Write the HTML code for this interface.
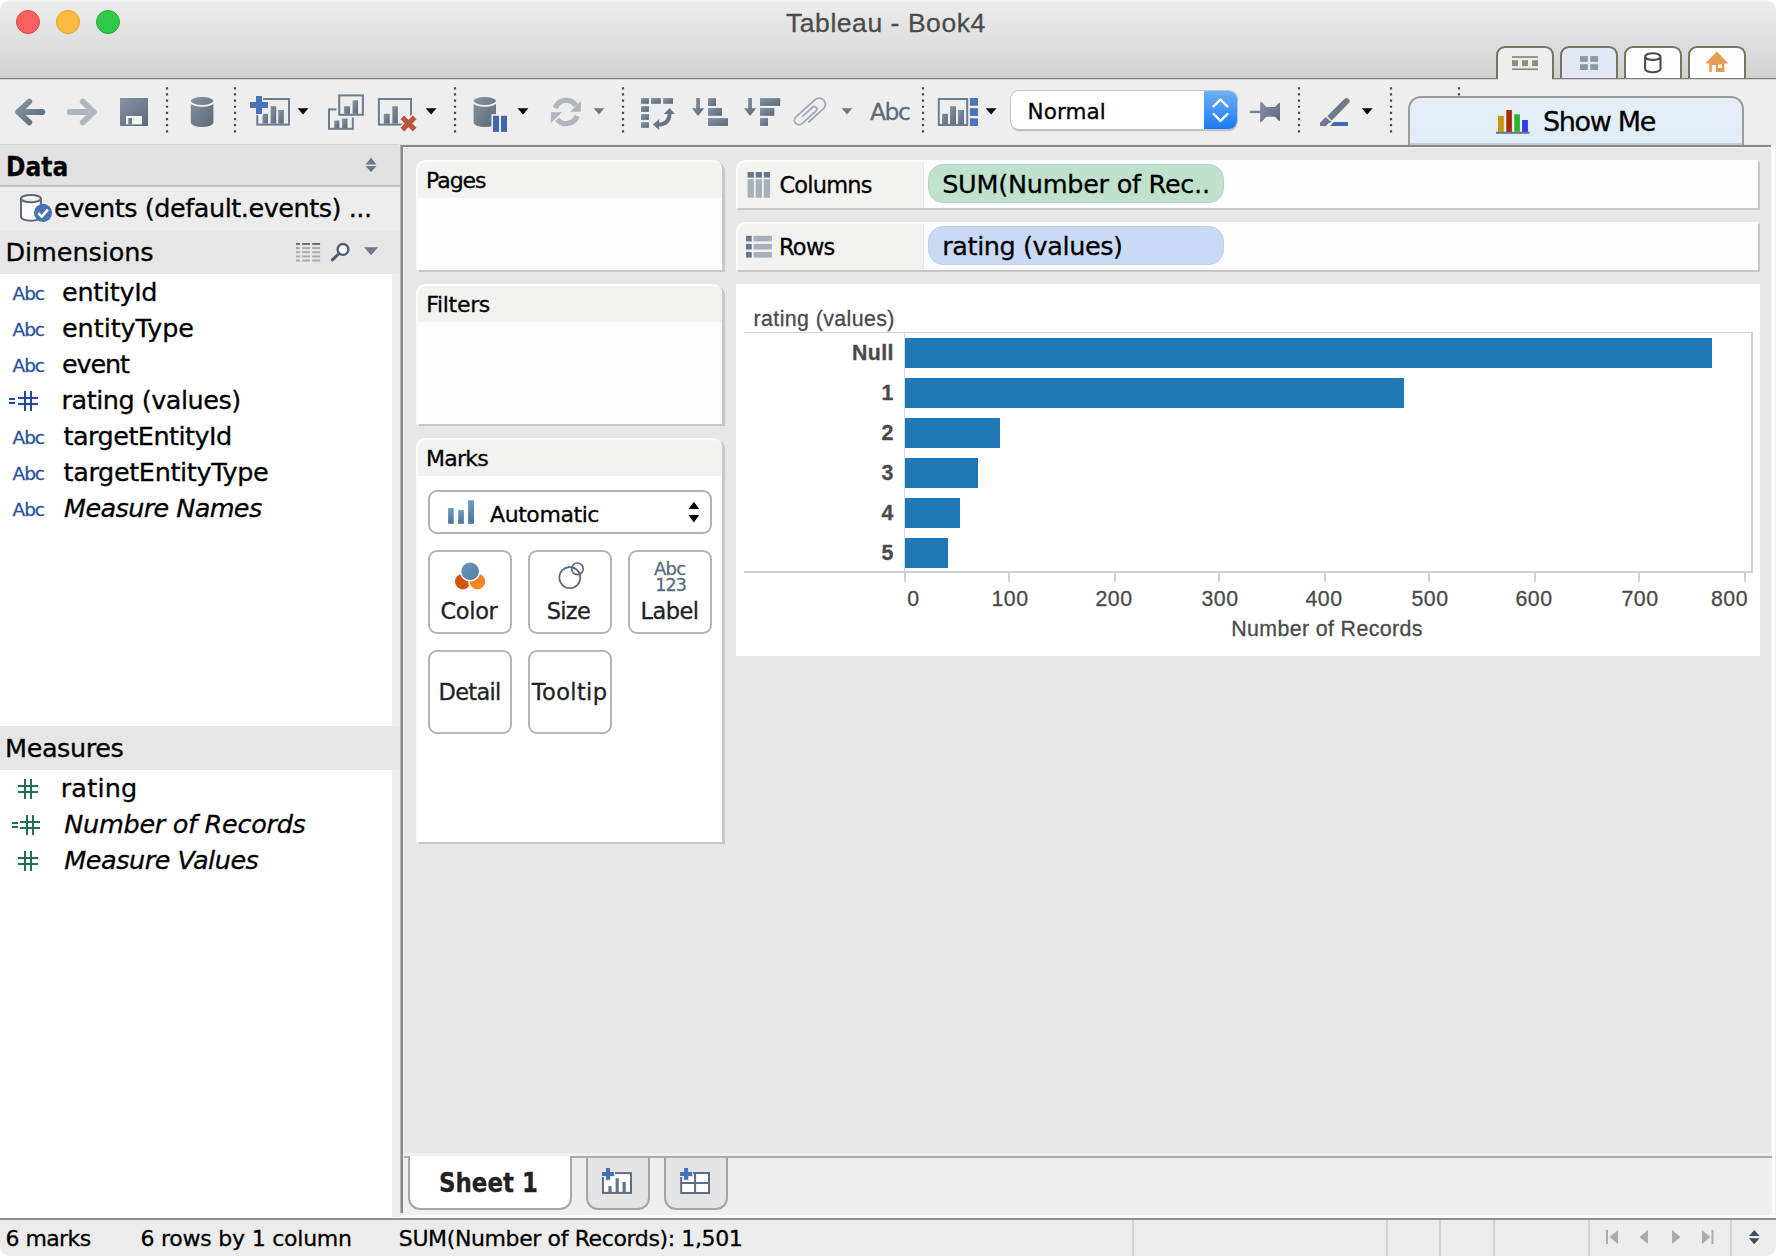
<!DOCTYPE html>
<html lang="en">
<head>
<meta charset="utf-8">
<title>Tableau - Book4</title>
<style>
html,body{margin:0;padding:0;}
body{width:1776px;height:1256px;position:relative;overflow:hidden;background:#e7e7e7;font-family:"DejaVu Sans","Liberation Sans",sans-serif;color:#000;}
div,span{box-sizing:border-box;}
.a{position:absolute;}
.t{position:absolute;white-space:nowrap;line-height:1;-webkit-text-stroke:0.3px currentColor;}
.ar{font-family:"Liberation Sans","DejaVu Sans",sans-serif;}
#icons{position:absolute;left:0;top:0;width:1776px;height:1256px;pointer-events:none;}
/* title bar */
#titlebar{left:0;top:0;width:1776px;height:78px;background:linear-gradient(#f4f4f4 0px,#f4f4f4 1px,#ececec 2.5px,#dfdfdf 40px,#d1d1d1 78px);border-radius:10px 10px 0 0;}
#titleline{left:0;top:78px;width:1776px;height:2px;background:linear-gradient(#7c7c7c 0,#7c7c7c 1.3px,#d0d0d0 1.3px,#d0d0d0 2px);}
#winbg{left:0;top:0;width:1776px;height:20px;background:#fff;}
.tl{border-radius:50%;width:24px;height:24px;top:10px;border:1px solid;}
/* toolbar */
#toolbar{left:0;top:80px;width:1776px;height:64px;background:#eeeeee;}
.wtab{top:46px;width:57px;height:34px;border:2px solid #74745f;border-bottom:none;border-radius:9px 9px 0 0;}
/* left panel */
#left{left:0;top:145px;width:400px;height:1073px;background:#fff;}
/* cards */
.card{background:#fdfdfd;border-radius:9px 9px 0 0;box-shadow:3px 2px 0 #c7c7c7;border-top:2px solid #fdfdfd;border-left:2px solid #fbfbfb;}
.card .hd{position:absolute;left:0;top:0;right:0;background:#f2f2f0;border-radius:8px 8px 0 0;}
.shelf{background:#fdfdfd;border-radius:9px 0 0 0;box-shadow:2px 2px 0 #c6c6c6;border-top:2px solid #fdfdfd;border-left:2px solid #fbfbfb;}
.shelf .lb{position:absolute;left:0;top:0;bottom:0;width:186px;background:#f2f2f0;border-radius:8px 0 0 0;border-right:1px solid #e9e9e7;}
.pill{position:absolute;border-radius:15px;}
.mbtn{position:absolute;width:84px;height:84px;border:2px solid #b4b4b4;border-radius:9px;background:#fff;}
</style>
</head>
<body>
<!-- ======= TITLE BAR ======= -->
<div class="a" id="winbg"></div>
<div class="a" id="titlebar"></div>
<div class="a tl" style="left:16px;background:#fc615d;border-color:#e0443e;"></div>
<div class="a tl" style="left:56px;background:#fdbc40;border-color:#dfa023;"></div>
<div class="a tl" style="left:96px;background:#34c84a;border-color:#1eab2f;"></div>
<div class="t ar" style="left:786px;top:10px;font-size:26.5px;letter-spacing:0.55px;color:#4b4b4b;">Tableau - Book4</div>
<!-- SECTION:TOOLBAR -->
<!-- ======= TOOLBAR ======= -->
<div class="a" id="toolbar"></div>
<div class="a" id="titleline"></div>
<!-- window tabs -->
<div class="a wtab" style="left:1496px;width:58px;background:#eeeeee;height:33px;"></div>
<div class="a wtab" style="left:1560px;width:58px;background:#e2e8f4;height:32px;"></div>
<div class="a wtab" style="left:1624px;width:58px;background:#fdfdfd;height:32px;"></div>
<div class="a wtab" style="left:1688px;width:58px;background:#fdfdfd;height:32px;"></div>
<div class="a" style="left:1498px;top:78px;width:54px;height:2px;background:#eeeeee;"></div>
<!-- toolbar text icon -->
<div class="t" style="left:870px;top:100.8px;font-size:23.5px;letter-spacing:-1.5px;color:#5c6c81;">Abc</div>
<!-- select -->
<div class="a" style="left:1011px;top:91px;width:226px;height:38px;border-radius:8px;background:#fff;box-shadow:0 0 0 1px #c4c4c4,0 2px 1px #b8b8b8;overflow:hidden;">
  <div class="a" style="right:0;top:0;width:33px;height:38px;background:linear-gradient(#6db1f9,#1a79f3);"></div>
</div>
<div class="t" style="left:1027.6px;top:100.9px;font-size:21.5px;letter-spacing:0.05px;color:#000;">Normal</div>
<!-- Show Me -->
<div class="a" style="left:1408px;top:96px;width:336px;height:49px;border:2px solid #9b9b9b;border-bottom:none;border-radius:13px 13px 0 0;background:linear-gradient(#e5eef7 0,#e0ecf6 44.5px,#c2cad1 44.5px);"></div>
<div class="t" style="left:1543px;top:108.4px;font-size:27px;letter-spacing:-1.35px;color:#000;">Show Me</div>
<!-- /SECTION:TOOLBAR -->
<!-- SECTION:LEFT -->
<!-- ======= LEFT DATA PANE ======= -->
<div class="a" id="left"></div>
<div class="a" style="left:0;top:144px;width:399px;height:1px;background:#d2d2d2;"></div>
<div class="a" style="left:0;top:145px;width:400px;height:41px;background:#e1e1e1;"></div>
<div class="a" style="left:0;top:185px;width:400px;height:2px;background:#c0c0c0;"></div>
<div class="a" style="left:0;top:187px;width:400px;height:43px;background:#ececec;"></div>
<div class="a" style="left:0;top:230px;width:400px;height:44px;background:#e6e6e6;"></div>
<div class="a" style="left:392px;top:274px;width:8px;height:943px;background:#ececec;"></div>
<div class="a" style="left:0;top:726px;width:400px;height:44px;background:#e6e6e6;"></div>
<div class="a" style="left:400px;top:145px;width:1px;height:1068px;background:#b4b4b4;"></div>
<div class="a" style="left:401px;top:145px;width:2px;height:1068px;background:#868686;"></div>
<div class="a" style="left:403px;top:147px;width:1px;height:1009px;background:#f3f3f3;"></div>
<div class="t" style="left:5.6px;top:153.6px;font-size:26px;font-weight:bold;transform-origin:0 0;transform:scaleX(0.9);">Data</div>
<div class="t" style="left:54px;top:195.73px;font-size:25.5px;letter-spacing:-0.46px;">events (default.events) ...</div>
<div class="t" style="left:5.5px;top:239.73px;font-size:25.5px;letter-spacing:-0.08px;">Dimensions</div>
<div class="t" style="left:62px;top:280.03px;font-size:25.5px;letter-spacing:-0.31px;">entityId</div>
<div class="t" style="left:12.5px;top:284.95px;font-size:18.5px;letter-spacing:-1.03px;color:#2a5298;">Abc</div>
<div class="t" style="left:62px;top:316.03px;font-size:25.5px;letter-spacing:-0.07px;">entityType</div>
<div class="t" style="left:12.5px;top:320.95px;font-size:18.5px;letter-spacing:-1.03px;color:#2a5298;">Abc</div>
<div class="t" style="left:62px;top:352.03px;font-size:25.5px;letter-spacing:-1.13px;">event</div>
<div class="t" style="left:12.5px;top:356.95px;font-size:18.5px;letter-spacing:-1.03px;color:#2a5298;">Abc</div>
<div class="t" style="left:61.5px;top:388.03px;font-size:25.5px;letter-spacing:-0.49px;">rating (values)</div>
<div class="t" style="left:63.5px;top:424.03px;font-size:25.5px;letter-spacing:-0.53px;">targetEntityId</div>
<div class="t" style="left:12.5px;top:428.95px;font-size:18.5px;letter-spacing:-1.03px;color:#2a5298;">Abc</div>
<div class="t" style="left:63.5px;top:460.03px;font-size:25.5px;letter-spacing:-0.36px;">targetEntityType</div>
<div class="t" style="left:12.5px;top:464.95px;font-size:18.5px;letter-spacing:-1.03px;color:#2a5298;">Abc</div>
<div class="t" style="left:64.1px;top:496.03px;font-size:25.5px;letter-spacing:-0.62px;font-style:italic;">Measure Names</div>
<div class="t" style="left:12.5px;top:500.95px;font-size:18.5px;letter-spacing:-1.03px;color:#2a5298;">Abc</div>
<div class="t" style="left:5.1px;top:735.93px;font-size:25.5px;letter-spacing:-0.44px;">Measures</div>
<div class="t" style="left:60.7px;top:776.13px;font-size:25.5px;letter-spacing:0.2px;">rating</div>
<div class="t" style="left:64.3px;top:812.13px;font-size:25.5px;letter-spacing:-0.29px;font-style:italic;">Number of Records</div>
<div class="t" style="left:64.3px;top:848.13px;font-size:25.5px;letter-spacing:-0.47px;font-style:italic;">Measure Values</div>
<!-- /SECTION:LEFT -->
<!-- SECTION:MAIN -->
<!-- ======= MAIN WORKSPACE ======= -->
<div class="a" style="left:401px;top:145px;width:1370px;height:2px;background:#868686;"></div>
<div class="a" style="left:404px;top:147px;width:1367px;height:1px;background:#f3f3f3;"></div>
<div class="a" style="left:1771px;top:144px;width:5px;height:1074px;background:linear-gradient(90deg,#f1f1f1 0,#f1f1f1 1px,#fdfdfd 1px,#fdfdfd 4px,#ececec 4px);"></div>
<div class="a card" style="left:416px;top:160px;width:306px;height:110px;"><div class="hd" style="height:36px;"></div></div>
<div class="t" style="left:426px;top:170.19px;font-size:22px;letter-spacing:-1.05px;">Pages</div>
<div class="a card" style="left:416px;top:284px;width:306px;height:140px;"><div class="hd" style="height:36px;"></div></div>
<div class="t" style="left:426.2px;top:294.19px;font-size:22px;letter-spacing:-0.3px;">Filters</div>
<div class="a card" style="left:416px;top:438px;width:306px;height:404px;background:#fff;"><div class="hd" style="height:36px;"></div></div>
<div class="t" style="left:426px;top:448.19px;font-size:22px;letter-spacing:-0.72px;">Marks</div>
<div class="a" style="left:428px;top:490px;width:284px;height:44px;border:2px solid #b2b2b2;border-radius:9px;background:#fff;"></div>
<div class="t" style="left:490px;top:504.39px;font-size:22px;letter-spacing:-0.42px;">Automatic</div>
<div class="mbtn" style="left:428px;top:550px;"></div>
<div class="mbtn" style="left:528px;top:550px;"></div>
<div class="mbtn" style="left:628px;top:550px;"></div>
<div class="mbtn" style="left:428px;top:650px;"></div>
<div class="mbtn" style="left:528px;top:650px;"></div>
<div class="t" style="left:440.5px;top:599.87px;font-size:22.5px;letter-spacing:-0.35px;color:#222;">Color</div>
<div class="t" style="left:546.8px;top:599.87px;font-size:22.5px;letter-spacing:-0.75px;color:#222;">Size</div>
<div class="t" style="left:640.6px;top:599.87px;font-size:22.5px;letter-spacing:-0.56px;color:#222;">Label</div>
<div class="t" style="left:438.6px;top:681.17px;font-size:22.5px;letter-spacing:-0.7px;color:#222;">Detail</div>
<div class="t" style="left:531.8px;top:681.17px;font-size:22.5px;letter-spacing:0.36px;color:#222;">Tooltip</div>
<div class="t" style="left:654px;top:560.37px;font-size:18px;letter-spacing:-0.75px;color:#5a6a80;">Abc</div>
<div class="t" style="left:655.3px;top:577.0px;font-size:17.5px;letter-spacing:-0.9px;color:#5a6a80;">123</div>
<div class="a shelf" style="left:736px;top:160px;width:1022px;height:48px;"><div class="lb"></div></div>
<div class="a shelf" style="left:736px;top:222px;width:1022px;height:48px;"><div class="lb"></div></div>
<div class="t" style="left:779.5px;top:173.97px;font-size:22.5px;letter-spacing:-0.84px;">Columns</div>
<div class="t" style="left:778.9px;top:235.97px;font-size:22.5px;letter-spacing:-0.7px;">Rows</div>
<div class="pill" style="left:928px;top:164px;width:296px;height:39px;background:#bfe1cd;border:1px solid #b3d7c2;"></div>
<div class="pill" style="left:928px;top:226px;width:296px;height:39px;background:#cadaf4;border:1px solid #bdd0ee;"></div>
<div class="t" style="left:942.2px;top:172.03px;font-size:25.5px;letter-spacing:-0.26px;">SUM(Number of Rec..</div>
<div class="t" style="left:942.3px;top:233.63px;font-size:25.5px;letter-spacing:-0.41px;">rating (values)</div>
<div class="a" style="left:736px;top:284px;width:1024px;height:372px;background:#fff;"></div>
<div class="t ar" style="left:753.6px;top:308.85px;font-size:21.33px;letter-spacing:0.4px;color:#4a4a4a;">rating (values)</div>
<div class="a" style="left:744px;top:332px;width:1009px;height:1px;background:#d4d4d4;"></div>
<div class="a" style="left:1751px;top:332px;width:2px;height:241px;background:#d2d2d2;"></div>
<div class="a" style="left:904px;top:333px;width:1px;height:238px;background:#dcdcdc;"></div>
<div class="a" style="left:744px;top:571px;width:1009px;height:2px;background:#cfcfcf;"></div>
<div class="a" style="left:905px;top:338px;width:806.7px;height:30px;background:#1f77b4;"></div>
<div class="t ar" style="right:882.2px;top:342.55px;font-size:21.33px;font-weight:bold;letter-spacing:0.4px;color:#4a4a4a;">Null</div>
<div class="a" style="left:905px;top:378px;width:498.7px;height:30px;background:#1f77b4;"></div>
<div class="t ar" style="right:882.2px;top:382.55px;font-size:21.33px;font-weight:bold;letter-spacing:0.4px;color:#4a4a4a;">1</div>
<div class="a" style="left:905px;top:418px;width:95px;height:30px;background:#1f77b4;"></div>
<div class="t ar" style="right:882.2px;top:422.55px;font-size:21.33px;font-weight:bold;letter-spacing:0.4px;color:#4a4a4a;">2</div>
<div class="a" style="left:905px;top:458px;width:73px;height:30px;background:#1f77b4;"></div>
<div class="t ar" style="right:882.2px;top:462.55px;font-size:21.33px;font-weight:bold;letter-spacing:0.4px;color:#4a4a4a;">3</div>
<div class="a" style="left:905px;top:498px;width:54.7px;height:30px;background:#1f77b4;"></div>
<div class="t ar" style="right:882.2px;top:502.55px;font-size:21.33px;font-weight:bold;letter-spacing:0.4px;color:#4a4a4a;">4</div>
<div class="a" style="left:905px;top:538px;width:42.9px;height:30px;background:#1f77b4;"></div>
<div class="t ar" style="right:882.2px;top:542.55px;font-size:21.33px;font-weight:bold;letter-spacing:0.4px;color:#4a4a4a;">5</div>
<div class="a" style="left:904px;top:573px;width:2px;height:9px;background:#d0d0d0;"></div>
<div class="t ar" style="left:907.3px;top:588.85px;font-size:21.33px;color:#4a4a4a;">0</div>
<div class="a" style="left:1008px;top:573px;width:2px;height:9px;background:#d0d0d0;"></div>
<div class="t ar" style="left:950px;width:120px;text-align:center;top:588.85px;font-size:21.33px;color:#4a4a4a;letter-spacing:0.45px;">100</div>
<div class="a" style="left:1114px;top:573px;width:2px;height:9px;background:#d0d0d0;"></div>
<div class="t ar" style="left:1054px;width:120px;text-align:center;top:588.85px;font-size:21.33px;color:#4a4a4a;letter-spacing:0.45px;">200</div>
<div class="a" style="left:1218px;top:573px;width:2px;height:9px;background:#d0d0d0;"></div>
<div class="t ar" style="left:1160px;width:120px;text-align:center;top:588.85px;font-size:21.33px;color:#4a4a4a;letter-spacing:0.45px;">300</div>
<div class="a" style="left:1324px;top:573px;width:2px;height:9px;background:#d0d0d0;"></div>
<div class="t ar" style="left:1264px;width:120px;text-align:center;top:588.85px;font-size:21.33px;color:#4a4a4a;letter-spacing:0.45px;">400</div>
<div class="a" style="left:1428px;top:573px;width:2px;height:9px;background:#d0d0d0;"></div>
<div class="t ar" style="left:1370px;width:120px;text-align:center;top:588.85px;font-size:21.33px;color:#4a4a4a;letter-spacing:0.45px;">500</div>
<div class="a" style="left:1534px;top:573px;width:2px;height:9px;background:#d0d0d0;"></div>
<div class="t ar" style="left:1474px;width:120px;text-align:center;top:588.85px;font-size:21.33px;color:#4a4a4a;letter-spacing:0.45px;">600</div>
<div class="a" style="left:1638px;top:573px;width:2px;height:9px;background:#d0d0d0;"></div>
<div class="t ar" style="left:1580px;width:120px;text-align:center;top:588.85px;font-size:21.33px;color:#4a4a4a;letter-spacing:0.45px;">700</div>
<div class="a" style="left:1744px;top:573px;width:2px;height:9px;background:#d0d0d0;"></div>
<div class="t ar" style="right:28px;top:588.85px;font-size:21.33px;color:#4a4a4a;letter-spacing:0.45px;">800</div>
<div class="t ar" style="left:1127px;width:400px;text-align:center;top:618.55px;font-size:21.33px;letter-spacing:0.38px;color:#4a4a4a;">Number of Records</div>
<!-- /SECTION:MAIN -->
<!-- SECTION:BOTTOM -->
<!-- ======= SHEET TABS + STATUS BAR ======= -->
<div class="a" style="left:403px;top:1153px;width:1369px;height:62px;background:#efefef;"></div>
<div class="a" style="left:404px;top:1156px;width:1368px;height:2px;background:#ababab;"></div>
<div class="a" style="left:400px;top:1215px;width:1376px;height:3px;background:#fbfbfb;"></div>
<div class="a" style="left:408px;top:1156px;width:164px;height:54px;background:#fff;border:2px solid #a6a6a6;border-top:none;border-radius:0 0 12px 12px;"></div>
<div class="a" style="left:586px;top:1158px;width:64px;height:52px;background:#e4e4e4;border:2px solid #a4a4a4;border-top:none;border-radius:0 0 12px 12px;"></div>
<div class="a" style="left:664px;top:1158px;width:64px;height:52px;background:#e4e4e4;border:2px solid #a4a4a4;border-top:none;border-radius:0 0 12px 12px;"></div>
<div class="t" style="left:438.7px;top:1169.06px;font-size:27px;font-weight:bold;color:#222;transform-origin:0 0;transform:scaleX(0.85);">Sheet 1</div>
<div class="a" style="left:0;top:1236px;width:1776px;height:20px;background:#fff;"></div>
<div class="a" style="left:0;top:1218px;width:1776px;height:38px;background:#ececec;border-top:2px solid #8e8e8e;border-radius:0 0 9px 9px;"></div>
<div class="t" style="left:5.6px;top:1228.19px;font-size:22px;letter-spacing:-0.6px;">6 marks</div>
<div class="t" style="left:140.5px;top:1228.19px;font-size:22px;letter-spacing:-0.23px;">6 rows by 1 column</div>
<div class="t" style="left:398.8px;top:1228.19px;font-size:22px;letter-spacing:-0.38px;">SUM(Number of Records): 1,501</div>
<div class="a" style="left:1132px;top:1220px;width:2px;height:36px;background:#d2d2d2;"></div>
<div class="a" style="left:1386px;top:1220px;width:2px;height:36px;background:#d2d2d2;"></div>
<div class="a" style="left:1439px;top:1220px;width:2px;height:36px;background:#d2d2d2;"></div>
<div class="a" style="left:1493px;top:1220px;width:2px;height:36px;background:#d2d2d2;"></div>
<div class="a" style="left:1588px;top:1220px;width:2px;height:36px;background:#d2d2d2;"></div>
<div class="a" style="left:1730px;top:1220px;width:2px;height:36px;background:#d2d2d2;"></div>
<!-- /SECTION:BOTTOM -->
<!-- SECTION:ICONS -->
<!-- ======= ICONS (single overlay SVG, absolute coordinates) ======= -->
<svg id="icons" width="1776" height="1256" viewBox="0 0 1776 1256">
<defs>
<linearGradient id="g" x1="0" y1="0" x2="1" y2="1"><stop offset="0" stop-color="#8694a4"/><stop offset="1" stop-color="#5a697b"/></linearGradient>
<linearGradient id="gl" x1="0" y1="0" x2="1" y2="1"><stop offset="0" stop-color="#b4bcc6"/><stop offset="1" stop-color="#a3acb8"/></linearGradient>
<linearGradient id="gv" x1="0" y1="0" x2="0" y2="1"><stop offset="0" stop-color="#6f9cc0"/><stop offset="1" stop-color="#46749c"/></linearGradient>
<linearGradient id="gb" x1="0" y1="0" x2="1" y2="1"><stop offset="0" stop-color="#6d98bd"/><stop offset="1" stop-color="#4f7ea6"/></linearGradient>
</defs>
<line x1="167" y1="87.2" x2="167" y2="133" stroke="#4c4c4c" stroke-width="2.2" stroke-dasharray="2.2 3.95"/>
<line x1="235" y1="87.2" x2="235" y2="133" stroke="#4c4c4c" stroke-width="2.2" stroke-dasharray="2.2 3.95"/>
<line x1="455" y1="87.2" x2="455" y2="133" stroke="#4c4c4c" stroke-width="2.2" stroke-dasharray="2.2 3.95"/>
<line x1="623" y1="87.2" x2="623" y2="133" stroke="#4c4c4c" stroke-width="2.2" stroke-dasharray="2.2 3.95"/>
<line x1="923" y1="87.2" x2="923" y2="133" stroke="#4c4c4c" stroke-width="2.2" stroke-dasharray="2.2 3.95"/>
<line x1="1299" y1="87.2" x2="1299" y2="133" stroke="#4c4c4c" stroke-width="2.2" stroke-dasharray="2.2 3.95"/>
<line x1="1391" y1="87.2" x2="1391" y2="133" stroke="#4c4c4c" stroke-width="2.2" stroke-dasharray="2.2 3.95"/>
<line x1="1459" y1="87.2" x2="1459" y2="96" stroke="#4c4c4c" stroke-width="2.2" stroke-dasharray="2.2 3.95"/>
<g fill="none" stroke-linecap="round" stroke-linejoin="round" stroke-width="5.8">
<path d="M42.3 112H18.2M29.3 101.6L18.2 112l11.1 10.4" stroke="url(#g)"/>
<path d="M69.7 112H93.8M82.7 101.6L93.8 112l-11.1 10.4" stroke="#aeb6c0"/>
</g>
<rect x="120" y="98" width="28" height="28" fill="url(#g)"/>
<rect x="126" y="116" width="16" height="8.3" fill="#f4f4f4"/>
<rect x="128.4" y="118" width="3.5" height="6.3" fill="#66758a"/>
<path d="M190.8 101.10000000000001A11.299999999999997 4.2 0 0 1 213.4 101.10000000000001V122.8A11.299999999999997 4.2 0 0 1 190.8 122.8Z" fill="url(#g)"/>
<path d="M190.8 101.7A11.299999999999997 4.2 0 0 0 213.4 101.7" fill="none" stroke="#f0f1f3" stroke-width="1.8"/>
<rect x="257.3" y="99" width="31.7" height="25.6" fill="none" stroke="#6d7b8e" stroke-width="2"/>
<rect x="262.5" y="113.8" width="5.5" height="9.8" fill="url(#g)"/>
<rect x="270.6" y="106.2" width="5.6" height="17.4" fill="url(#g)"/>
<rect x="278.2" y="110" width="5.6" height="13.6" fill="url(#g)"/>
<path d="M256 96h6v6h6v6h-6v6h-6v-6h-6v-6h6z" fill="#4a74b8" stroke="#eeeeee" stroke-width="2.4" paint-order="stroke"/>
<path d="M297.6 108.2h10.8l-5.4 6.2z" fill="#000"/>
<rect x="329" y="109.4" width="23.8" height="19.4" fill="none" stroke="#6d7b8e" stroke-width="2"/>
<rect x="334.3" y="120.5" width="5.1" height="7.6" fill="url(#g)"/>
<rect x="342.1" y="118.5" width="5.4" height="9.6" fill="url(#g)"/>
<rect x="336.4" y="92.6" width="29.3" height="25" fill="#eeeeee"/>
<rect x="339.2" y="95.4" width="23.7" height="19.4" fill="none" stroke="#6d7b8e" stroke-width="2"/>
<rect x="344.1" y="106.2" width="5.9" height="7.6" fill="url(#g)"/>
<rect x="352.6" y="100.3" width="5.4" height="13.5" fill="url(#g)"/>
<rect x="378.9" y="99" width="32.1" height="25.6" fill="none" stroke="#6d7b8e" stroke-width="2"/>
<rect x="383.8" y="113.8" width="5.9" height="9.8" fill="url(#g)"/>
<rect x="392.3" y="106.2" width="5.5" height="17.4" fill="url(#g)"/>
<path d="M402.3 117.3l12.4 12.4M414.7 117.3l-12.4 12.4" stroke="#eeeeee" stroke-width="8" fill="none"/>
<path d="M402.3 117.3l12.4 12.4M414.7 117.3l-12.4 12.4" stroke="#b7553a" stroke-width="5.2" fill="none"/>
<path d="M425.7 108.2h10.8l-5.4 6.2z" fill="#000"/>
<path d="M473.6 101.10000000000001A11.199999999999989 4.2 0 0 1 496 101.10000000000001V122.8A11.199999999999989 4.2 0 0 1 473.6 122.8Z" fill="url(#g)"/>
<path d="M473.6 101.7A11.199999999999989 4.2 0 0 0 496 101.7" fill="none" stroke="#f0f1f3" stroke-width="1.8"/>
<rect x="491.4" y="114.2" width="17.2" height="19" fill="#eeeeee"/>
<rect x="493" y="115.8" width="6" height="16.1" fill="#3f68ae"/><rect x="501" y="115.8" width="6" height="16.1" fill="#3f68ae"/>
<path d="M517.6 108.2h10.8l-5.4 6.2z" fill="#000"/>
<g fill="none" stroke="#adb5c0" stroke-width="5.3">
<path d="M555.3 108A11.6 11.6 0 0 1 575.8 105.5"/>
<path d="M577.1 116A11.6 11.6 0 0 1 557.2 119.3"/>
</g>
<path d="M580.9 101.1v10.7h-10.7z" fill="#adb5c0"/>
<path d="M550.9 123.1v-10.9h10.9z" fill="#adb5c0"/>
<path d="M593.6 108.2h10.8l-5.4 6.2z" fill="#7b7b7b"/>
<rect x="641" y="98.1" width="7.9" height="5.7" fill="url(#g)"/>
<rect x="651" y="98.1" width="9.8" height="5.7" fill="url(#g)"/>
<rect x="663.2" y="98.1" width="9.8" height="5.7" fill="url(#g)"/>
<rect x="641" y="106.2" width="7.9" height="5.7" fill="url(#g)"/>
<rect x="641" y="114.1" width="7.9" height="5.8" fill="url(#g)"/>
<rect x="641" y="122.2" width="7.9" height="5.6" fill="url(#g)"/>
<path d="M658.5 124.6Q669.6 124.2 669.6 113.4" fill="none" stroke="#65748a" stroke-width="3.8"/>
<path d="M659.2 119v11.1l-6.2 -5.55z" fill="#65748a"/>
<path d="M664 114h11l-5.5 -6z" fill="#65748a"/>
<path d="M696.1999999999999 98.1h3.7v10.2h4.3l-6.15 7.6l-6.15 -7.6h4.3z" fill="url(#g)"/>
<rect x="708" y="98.1" width="8" height="7.8" fill="url(#g)"/>
<rect x="708" y="108" width="14" height="7.8" fill="url(#g)"/>
<rect x="708" y="118.1" width="20" height="7.8" fill="url(#g)"/>
<path d="M748.1999999999999 98.1h3.7v10.2h4.3l-6.15 7.6l-6.15 -7.6h4.3z" fill="url(#g)"/>
<rect x="760" y="98.1" width="20.2" height="7.8" fill="url(#g)"/>
<rect x="760" y="108" width="14.3" height="7.8" fill="url(#g)"/>
<rect x="760" y="118.1" width="8" height="7.8" fill="url(#g)"/>
<g transform="translate(803.7 109.9) rotate(48)" fill="none" stroke="#a1abb7" stroke-width="1.8">
<path d="M4 5.95V-8.4A2.5 2.5 0 0 1 9 -8.4V10.4A4.5 4.5 0 0 1 0 10.4V-15.2A6.2 6.2 0 0 1 12.4 -15.2V5"/>
</g>
<path d="M841.6 108.2h10.8l-5.4 6.2z" fill="#7b7b7b"/>
<rect x="938.8" y="99" width="28.4" height="26" fill="none" stroke="#6d7b8e" stroke-width="2"/>
<rect x="942" y="113.8" width="5.9" height="10.5" fill="url(#g)"/>
<rect x="950" y="106.2" width="6" height="18.1" fill="url(#g)"/>
<rect x="958" y="110" width="6" height="14.3" fill="url(#g)"/>
<rect x="969.9" y="98" width="8.1" height="7.7" fill="#4a74b8"/>
<rect x="969.9" y="108.2" width="8.1" height="7.7" fill="#4a74b8"/>
<rect x="969.9" y="118.3" width="8.1" height="7.7" fill="#4a74b8"/>
<path d="M985.7 108.2h10.8l-5.4 6.2z" fill="#000"/>
<path d="M1213.6 106.3l6.9 -6.8l6.9 6.8M1213.6 114l6.9 6.8l6.9 -6.8" fill="none" stroke="#fff" stroke-width="2.4" stroke-linecap="round" stroke-linejoin="round"/>
<rect x="1249.9" y="110.7" width="11" height="2.4" fill="#76849a"/>
<path d="M1260.1 101.8C1263.2 101.8 1264.6 106.9 1267.2 106.9H1274.3C1276.4 106.9 1277.8 102.8 1280 102.8V121.1C1277.8 121.1 1276.4 116.8 1274.3 116.8H1267.2C1264.6 116.8 1263.2 122.2 1260.1 122.2Z" fill="url(#g)"/>
<path d="M1346.5 101.2L1330.3 117.5" stroke="#6c7a8d" stroke-width="6.1" stroke-linecap="round" fill="none"/>
<path d="M1326.9 116.2l4.8 4.8l-2.6 2.6l-4.8 -4.8z" fill="#6c7a8d"/>
<path d="M1324.7 117.7l4.6 4.3l-3.1 3.9h-6.2v-2.9z" fill="#6c7a8d"/>
<path d="M1325.6 115.6l5.2 5.2" stroke="#eeeeee" stroke-width="1.5" fill="none"/>
<path d="M1333.8 121.9h14.2v4h-17.8z" fill="#3f6bb0"/>
<path d="M1361.8 108.2h10.8l-5.4 6.2z" fill="#000"/>
<rect x="1498" y="115.9" width="5.8" height="16" fill="#c8960a"/><rect x="1506.3" y="110" width="5.6" height="22" fill="#a52c08"/><rect x="1514.3" y="114.3" width="5.6" height="17.5" fill="#2bb52b"/><rect x="1522.1" y="120" width="5.8" height="12" fill="#3434fe"/><rect x="1496" y="131.8" width="33.7" height="2" fill="#5f7893"/>
<g fill="#908d76"><rect x="1512" y="56.1" width="26" height="1.8"/><rect x="1512" y="68.3" width="26" height="1.8"/><rect x="1512" y="60.2" width="5.9" height="5.9"/><rect x="1522.1" y="60.2" width="5.9" height="5.9"/><rect x="1532.1" y="60.2" width="5.9" height="5.9"/></g>
<g fill="#8997a7"><rect x="1580" y="56.1" width="7.8" height="5.7"/><rect x="1590.3" y="56.1" width="7.8" height="5.7"/><rect x="1580" y="64.2" width="7.8" height="5.8"/><rect x="1590.3" y="64.2" width="7.8" height="5.8"/></g>
<path d="M1645.1 56.6A7.7 3.3 0 0 1 1660.5 56.6V68.9A7.7 3.3 0 0 1 1645.1 68.9ZM1645.1 56.6A7.7 3.3 0 0 0 1660.5 56.6" fill="#fff" stroke="#4b4b4b" stroke-width="2.1"/>
<path d="M1716.9 51.6l11.4 11.8h-4v8.5h-8.4v-6.9h-4.1v6.9h-2.6v-8.5h-3.7zM1718 64.4h4v3.5h-4z" fill="#e99a55" fill-rule="evenodd"/>
<path d="M365.6 164.4h10.9l-5.45 -6.6zM365.6 166h10.9l-5.45 6.2z" fill="#6b798c"/>
<path d="M21 198.6A9.9 3.7 0 0 1 40.9 198.6V217A9.9 3.7 0 0 1 21 217ZM21 198.6A9.9 3.7 0 0 0 40.9 198.6" fill="#fcfcfc" stroke="#5b6979" stroke-width="2"/>
<circle cx="43" cy="212.9" r="9.1" fill="#4a72b5"/>
<path d="M38.3 213.2l3.4 3.4l6.2 -7" fill="none" stroke="#fff" stroke-width="2.6"/>
<g fill="#a9a9a9">
<rect x="296" y="243.0" width="4" height="1.9" fill="#5b6b80"/><rect x="302.1" y="243.0" width="7.9" height="1.9" fill="#5b6b80"/><rect x="312.2" y="243.0" width="7.9" height="1.9" fill="#5b6b80"/>
<rect x="296" y="247.15" width="4" height="1.9"/><rect x="302.1" y="247.15" width="7.9" height="1.9"/><rect x="312.2" y="247.15" width="7.9" height="1.9"/>
<rect x="296" y="251.3" width="4" height="1.9"/><rect x="302.1" y="251.3" width="7.9" height="1.9"/><rect x="312.2" y="251.3" width="7.9" height="1.9"/>
<rect x="296" y="255.45" width="4" height="1.9"/><rect x="302.1" y="255.45" width="7.9" height="1.9"/><rect x="312.2" y="255.45" width="7.9" height="1.9"/>
<rect x="296" y="259.6" width="4" height="1.9"/><rect x="302.1" y="259.6" width="7.9" height="1.9"/><rect x="312.2" y="259.6" width="7.9" height="1.9"/>
</g>
<circle cx="343" cy="249.4" r="5.4" fill="#fff" stroke="#4d5d73" stroke-width="2.3"/><path d="M339 253.6l-6.6 6.2" stroke="#4d5d73" stroke-width="3" stroke-linecap="round"/>
<path d="M364 247.2h14.1l-7.05 8z" fill="#6b798c"/>
<g fill="#1e4b95">
<rect x="24" y="391" width="2" height="20"/><rect x="30" y="391" width="2" height="20"/>
<rect x="18" y="397" width="20" height="2"/><rect x="18" y="403" width="20" height="2"/>
<rect x="9" y="398" width="6" height="2"/><rect x="9" y="402" width="6" height="2"/>
</g>
<g fill="#1f6f50">
<rect x="24" y="779" width="2" height="20"/><rect x="30" y="779" width="2" height="20"/>
<rect x="18" y="785" width="20" height="2"/><rect x="18" y="791" width="20" height="2"/>
</g>
<g fill="#1f6f50">
<rect x="26" y="815" width="2" height="20"/><rect x="32" y="815" width="2" height="20"/>
<rect x="20" y="821" width="20" height="2"/><rect x="20" y="827" width="20" height="2"/>
<rect x="12" y="822" width="6" height="2"/><rect x="12" y="826" width="6" height="2"/>
</g>
<g fill="#1f6f50">
<rect x="24" y="851" width="2" height="20"/><rect x="30" y="851" width="2" height="20"/>
<rect x="18" y="857" width="20" height="2"/><rect x="18" y="863" width="20" height="2"/>
</g>
<rect x="448.1" y="508" width="5.6" height="15.8" fill="url(#gv)"/>
<rect x="458.2" y="510.1" width="5.7" height="13.7" fill="url(#gv)"/>
<rect x="468.1" y="500.2" width="5.9" height="23.6" fill="url(#gv)"/>
<path d="M688.5 509h10.7l-5.35 -7.3zM688.5 515.1h10.7l-5.35 7.3z" fill="#000"/>
<circle cx="462.8" cy="581.6" r="8.6" fill="#d25606" stroke="#fff" stroke-width="1.6"/>
<circle cx="477.4" cy="581.6" r="8.6" fill="#f58422" stroke="#fff" stroke-width="1.6"/>
<circle cx="470.1" cy="571.2" r="9.6" fill="url(#gb)" stroke="#fff" stroke-width="1.6"/>
<circle cx="569.8" cy="577.6" r="10.5" fill="none" stroke="#5b6979" stroke-width="1.7"/><circle cx="577.4" cy="568.8" r="5.8" fill="none" stroke="#5b6979" stroke-width="1.7"/>
<rect x="747.6" y="172" width="6.3" height="5.6" fill="#66758a"/><rect x="747.6" y="179.3" width="6.3" height="18.4" fill="#a7afba"/>
<rect x="755.7" y="172" width="6.3" height="5.6" fill="#66758a"/><rect x="755.7" y="179.3" width="6.3" height="18.4" fill="#a7afba"/>
<rect x="763.8" y="172" width="6.3" height="5.6" fill="#66758a"/><rect x="763.8" y="179.3" width="6.3" height="18.4" fill="#a7afba"/>
<rect x="746.1" y="235.8" width="5.6" height="5.6" fill="#66758a"/><rect x="753.6" y="235.8" width="18.3" height="5.6" fill="#a7afba"/>
<rect x="746.1" y="243.9" width="5.6" height="5.6" fill="#66758a"/><rect x="753.6" y="243.9" width="18.3" height="5.6" fill="#a7afba"/>
<rect x="746.1" y="252.0" width="5.6" height="5.6" fill="#66758a"/><rect x="753.6" y="252.0" width="18.3" height="5.6" fill="#a7afba"/>
<rect x="603" y="1173.1" width="28" height="19.8" fill="#fff" stroke="#5e6d81" stroke-width="2"/>
<rect x="608.4" y="1186.1" width="3.3" height="6" fill="#66758a"/><rect x="615.6" y="1178.2" width="3.2" height="14" fill="#66758a"/><rect x="622.5" y="1182" width="3.3" height="10" fill="#66758a"/>
<path d="M606 1168h4v3.9h4v4h-4v3.9h-4v-3.9h-4v-4h4z" fill="#4470b6" stroke="#e4e4e4" stroke-width="2" paint-order="stroke"/>
<path d="M681.2 1173.1h27.8v19.8h-27.8zM681.2 1183h27.8M695.1 1173.1v19.8" fill="#fff" stroke="#5e6d81" stroke-width="2"/>
<path d="M684.1 1168h4v3.9h4v4h-4v3.9h-4v-3.9h-4v-4h4z" fill="#4470b6" stroke="#e4e4e4" stroke-width="2" paint-order="stroke"/>
<g fill="#ababab"><rect x="1606" y="1230" width="2" height="14"/><path d="M1618 1230v14l-8.5 -7z"/><path d="M1648 1230v14l-8.5 -7z"/><path d="M1672 1230v14l8.5 -7z"/><path d="M1702 1230v14l8.5 -7z"/><rect x="1711.5" y="1230" width="2" height="14"/></g>
<path d="M1749 1236h10.5l-5.25 -6zM1749 1238.2h10.5l-5.25 6z" fill="#3d4c62"/>
</svg>
<!-- /SECTION:ICONS -->
</body>
</html>
